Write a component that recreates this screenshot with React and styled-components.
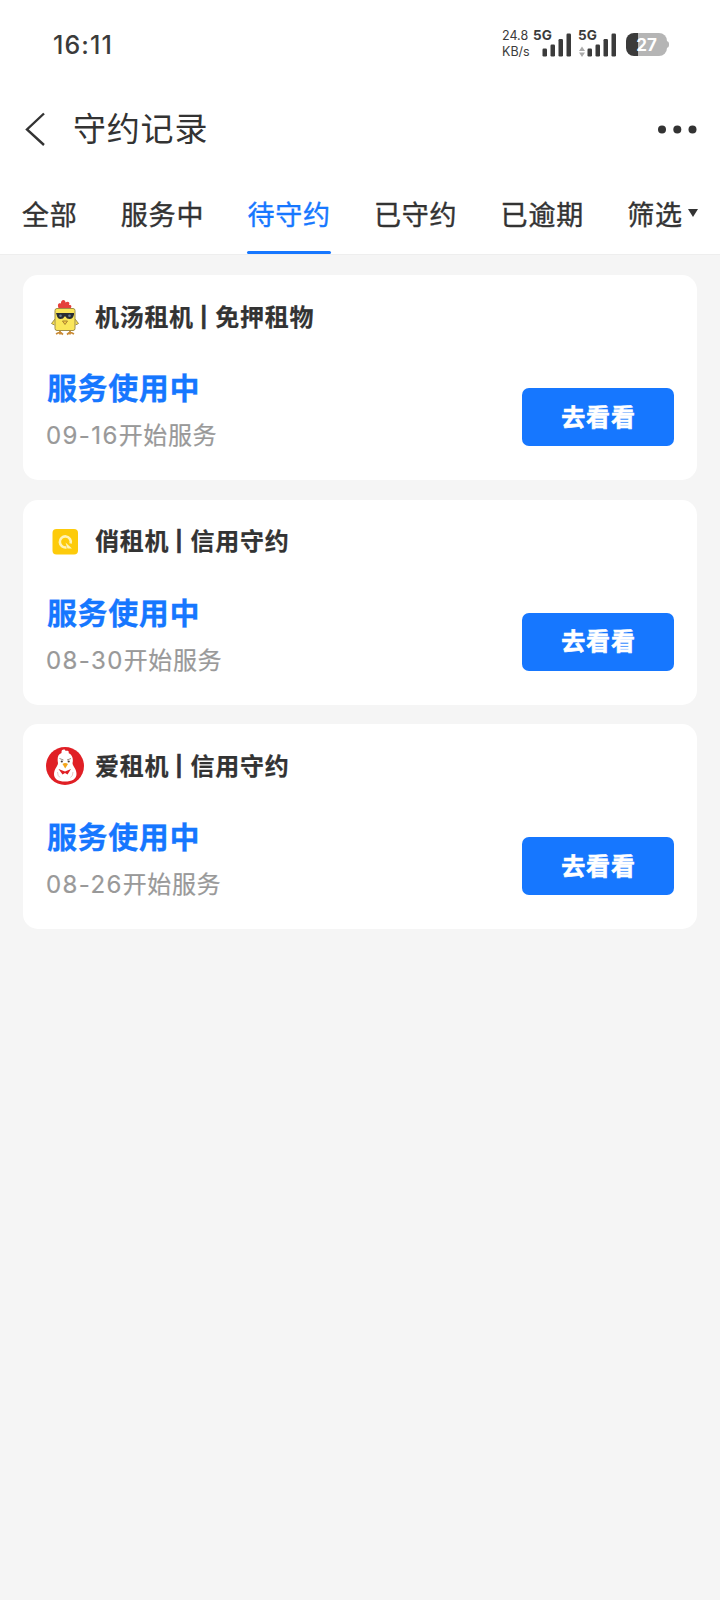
import React, { useState } from "react";
import styled, { createGlobalStyle } from "styled-components";

const TABS = ["全部", "服务中", "待守约", "已守约", "已逾期"];

const RECORDS = [
    {
        id: 1,
        logo: "chick",
        shop: "机汤租机",
        type: "免押租物",
        status: "服务使用中",
        date: "09-16",
    },
    {
        id: 2,
        logo: "qiao",
        shop: "俏租机",
        type: "信用守约",
        status: "服务使用中",
        date: "08-30",
    },
    {
        id: 3,
        logo: "hen",
        shop: "爱租机",
        type: "信用守约",
        status: "服务使用中",
        date: "08-26",
    },
];

function ChickLogo() {
    return (
        <svg width="38" height="38" viewBox="0 0 38 38">
            <path
                d="M13 11 C11 7 12 4.500 15 5.500 C14.500 2 19 0.500 19.500 4.500 C22 2.500 24.500 4.500 23 7 C26 6.500 26 9 24 11 Z"
                fill="#e5403c"
            />
            <path
                d="M9 21 L5.500 25.500 L8.500 27 M29 21 L32.500 25.500 L29.500 27"
                fill="#f8df45"
                stroke="#a08e48"
                strokeWidth="1"
            />
            <path
                d="M14 32 V36.500 M10 36 L14 34 L17 36.500 M24 32 V36.500 M21 36.500 L24 34 L28 36"
                fill="none"
                stroke="#c98a35"
                strokeWidth="1.800"
            />
            <rect
                x="9"
                y="10.500"
                width="20"
                height="22"
                rx="2"
                fill="#fae65a"
                stroke="#a08e48"
                strokeWidth="1"
            />
            <path
                d="M10 15 H28 V16.500 Q27 21 23.500 21 Q20.500 21 19.500 18.500 H18.500 Q17.500 21 14.500 21 Q11.500 21 10.500 16.500 Z"
                fill="#292d33"
            />
            <circle cx="14.500" cy="17.800" r="1.300" fill="#687d90" />
            <circle cx="23.500" cy="17.800" r="1.300" fill="#687d90" />
            <path
                d="M16.500 23 H21.500 L19 26.500 Z"
                fill="#f8cf45"
                stroke="#a0782d"
                strokeWidth="0.900"
            />
        </svg>
    );
}

function QiaoLogo() {
    return (
        <svg width="38" height="38" viewBox="0 0 38 38">
            <rect x="6.500" y="6" width="25.500" height="25.500" rx="4" fill="#fdcb0b" />
            <path
                d="M20.500 24.300 A5.500 5.500 0 1 1 24.600 20.500"
                fill="none"
                stroke="#fff3b8"
                strokeWidth="2.600"
            />
            <path d="M19.500 19.500 L26 25.500 H21.500 Z" fill="#fff3b8" />
        </svg>
    );
}

function HenLogo() {
    return (
        <svg width="38" height="38" viewBox="0 0 38 38">
            <circle cx="19" cy="19" r="19" fill="#e01f25" />
            <path
                d="M15.500 5 C15.500 2 19.500 2 19.500 4 C22 3 23.500 4.500 22.500 6 C26.500 8 27.500 12 26.500 16 C26.500 19 30.500 22 30.500 27 C30.500 32 26 34.500 19 34.500 C12 34.500 8 32 8 27 C8 22 12 19 12 16 C11 11 12 7 15.500 6 Z"
                fill="#fff"
            />
            <path
                d="M13.500 11.500 L17.500 13 M25 11.500 L21 13"
                stroke="#a08c80"
                strokeWidth="1"
            />
            <circle cx="15.800" cy="14.500" r="1.100" fill="#4a3a38" />
            <circle cx="22.700" cy="14.500" r="1.100" fill="#4a3a38" />
            <path d="M16.500 17 Q19 15 22 17 L19.200 21.500 Z" fill="#f4a51c" />
            <path
                d="M12.500 22 L19 24.500 L25 22 L21.500 27.500 L19 26 L16.500 27.500 Z"
                fill="#e01f25"
            />
            <path
                d="M11.500 25 Q11.500 29 14 30.500 M27 25 Q27 29 24.500 30.500"
                fill="none"
                stroke="#e9b3b1"
                strokeWidth="0.800"
            />
        </svg>
    );
}

const LOGOS = { chick: ChickLogo, qiao: QiaoLogo, hen: HenLogo };

function Signal({ arrows }) {
    return (
        <SignalBox>
            <Network>5G</Network>
            <svg width="38" height="26" viewBox="0 0 38 26">
                {arrows && (
                    <path d="M1 20 L4 15.500 L7 20 Z M1 21.500 L4 26 L7 21.500 Z" fill="#aaa" />
                )}
                <g fill="#3b3b3b">
                    <rect x="9.500" y="17.500" width="4.500" height="8" rx="1.200" />
                    <rect x="17.500" y="13.500" width="4.500" height="12" rx="1.200" />
                    <rect x="25.500" y="8" width="4.500" height="17.500" rx="1.200" />
                    <rect x="33.500" y="2.500" width="4.500" height="23" rx="1.200" />
                </g>
            </svg>
        </SignalBox>
    );
}

function StatusBar() {
    return (
        <StatusRow>
            <Clock>16:11</Clock>
            <StatusIcons>
                <Speed>
                    <span>24.8</span>
                    <span>KB/s</span>
                </Speed>
                <Signal />
                <Signal arrows />
                <Battery>27</Battery>
            </StatusIcons>
        </StatusRow>
    );
}

function RecordCard({ record }) {
    const Logo = LOGOS[record.logo];

    return (
        <Card>
            <CardHead>
                <Logo />
                <CardTitle>
                    {record.shop}
                    <Bar>|</Bar>
                    {record.type}
                </CardTitle>
            </CardHead>
            <CardBody>
                <div>
                    <Status>{record.status}</Status>
                    <StartDate>
                        <Day>{record.date}</Day>开始服务
                    </StartDate>
                </div>
                <LookButton>去看看</LookButton>
            </CardBody>
        </Card>
    );
}

function App() {
    const [tab, setTab] = useState("待守约");

    return (
        <>
            <GlobalStyle />
            <Page>
                <Header>
                    <StatusBar />
                    <TitleBar>
                        <svg width="21" height="34" viewBox="0 0 21 34">
                            <path
                                d="M20 1.500 L3 17.500 L20 33"
                                fill="none"
                                stroke="#333"
                                strokeWidth="2.400"
                            />
                        </svg>
                        <PageTitle>守约记录</PageTitle>
                        <svg width="40" height="10" viewBox="0 0 40 10">
                            <g fill="#333">
                                <circle cx="5" cy="5.500" r="4" />
                                <circle cx="20.300" cy="5.500" r="4" />
                                <circle cx="35.500" cy="5.500" r="4" />
                            </g>
                        </svg>
                    </TitleBar>
                    <Tabs>
                        {TABS.map((name) => (
                            <Tab
                                key={name}
                                $active={name === tab}
                                onClick={() => setTab(name)}
                            >
                                {name}
                            </Tab>
                        ))}
                        <Tab>
                            筛选
                            <Caret />
                        </Tab>
                    </Tabs>
                </Header>
                <List>
                    {RECORDS.map((record) => (
                        <RecordCard key={record.id} record={record} />
                    ))}
                </List>
            </Page>
        </>
    );
}

export default App;

const GlobalStyle = createGlobalStyle`
    * {
        box-sizing: border-box;
    }
    body {
        margin: 0;
        background: #f5f5f5;
        font-family: Inter, "Noto Sans CJK SC", sans-serif;
        color: #333;
    }
    svg {
        display: block;
        flex-shrink: 0;
    }
`;

const Page = styled.div`
    width: 720px;
    min-height: 1600px;
    background: #f5f5f5;
`;

const Header = styled.header`
    height: 255px;
    background: #fff;
    border-bottom: 1px solid #eee;
`;

const StatusRow = styled.div`
    display: flex;
    align-items: center;
    justify-content: space-between;
    height: 88px;
    padding: 0 53px 0 53px;
`;

const Clock = styled.div`
    padding-top: 2px;
    font-size: 25px;
    font-weight: 500;
    line-height: 30px;
    letter-spacing: 1.1px;
    color: #3b3b3b;
`;

const StatusIcons = styled.div`
    display: flex;
    align-items: center;
`;

const Speed = styled.div`
    display: flex;
    flex-direction: column;
    width: 31px;
    font-size: 12.5px;
    line-height: 16px;
    color: #3b3b3b;
`;

const SignalBox = styled.div`
    position: relative;
    margin-right: 7px;
`;

const Network = styled.span`
    position: absolute;
    top: -2px;
    left: 0;
    font-size: 13.5px;
    font-weight: 700;
    line-height: 13px;
    color: #3b3b3b;
`;

const Battery = styled.div`
    position: relative;
    width: 41px;
    height: 23px;
    margin-left: 3px;
    border-radius: 8px;
    background: linear-gradient(to right, #3b3b3b 12px, #b5b5b5 12px);
    color: #fff;
    font-size: 17px;
    font-weight: 700;
    line-height: 24px;
    text-align: center;

    &::after {
        content: "";
        position: absolute;
        top: 8px;
        right: -2px;
        width: 3px;
        height: 7px;
        border-radius: 0 3px 3px 0;
        background: #b5b5b5;
    }
`;

const TitleBar = styled.div`
    display: flex;
    align-items: center;
    height: 82px;
    padding: 0 23px 0 24px;
`;

const PageTitle = styled.h1`
    flex: 1;
    margin: 0 0 0 28px;
    font-size: 33px;
    font-weight: 400;
    line-height: 44px;
    letter-spacing: 0.8px;
`;

const Tabs = styled.nav`
    display: flex;
    gap: 43.2px;
    height: 84px;
    padding-left: 22px;
`;

const Tab = styled.div`
    position: relative;
    display: flex;
    align-items: center;
    height: 84px;
    padding-top: 3px;
    color: ${(props) => (props.$active ? "#1677ff" : "#333")};
    font-size: 27px;
    letter-spacing: 0.8px;
    white-space: nowrap;
    -webkit-text-stroke: 0.4px currentColor;
    cursor: pointer;

    &::after {
        content: "";
        position: absolute;
        left: 0;
        right: 0;
        bottom: 0;
        height: 3.5px;
        border-radius: 2px;
        background: ${(props) => (props.$active ? "#1677ff" : "transparent")};
    }
`;

const Caret = styled.span`
    margin: -1px 0 0 5px;
    border-top: 8px solid #333;
    border-left: 5px solid transparent;
    border-right: 5px solid transparent;
`;

const List = styled.main`
    display: flex;
    flex-direction: column;
    gap: 19.6px;
    padding: 20.3px 23px;
`;

const Card = styled.section`
    height: 205px;
    padding: 23px 23px 0;
    border-radius: 15px;
    background: #fff;
`;

const CardHead = styled.div`
    display: flex;
    align-items: center;
    height: 38px;
`;

const CardTitle = styled.h2`
    display: flex;
    margin: 1px 0 0 11px;
    font-size: 24px;
    font-weight: 700;
    line-height: 36px;
    letter-spacing: 0.7px;
    -webkit-text-stroke: 0.2px currentColor;
`;

const Bar = styled.span`
    width: 21.5px;
    padding-right: 1px;
    font-size: 20px;
    line-height: 35px;
    text-align: center;
    -webkit-text-stroke: 0.6px currentColor;
`;

const CardBody = styled.div`
    display: flex;
    justify-content: space-between;
    padding-top: 30px;
`;

const Status = styled.div`
    padding-left: 1px;
    color: #1677ff;
    font-size: 30px;
    font-weight: 700;
    line-height: 44px;
    letter-spacing: 0.6px;
    -webkit-text-stroke: 0.3px currentColor;
`;

const StartDate = styled.div`
    margin-top: 8px;
    color: #999;
    font-size: 24px;
    line-height: 36px;
    letter-spacing: 0.6px;
    -webkit-text-stroke: 0.2px currentColor;
`;

const Day = styled.span`
    letter-spacing: 1.4px;
`;

const LookButton = styled.button`
    width: 152px;
    height: 58px;
    margin-top: 22px;
    padding: 0 0 4px 1px;
    border: 0;
    border-radius: 7px;
    background: #1677ff;
    color: #fff;
    font-family: inherit;
    font-size: 24px;
    font-weight: 700;
    letter-spacing: 0.9px;
    -webkit-text-stroke: 0.6px #fff;
`;
